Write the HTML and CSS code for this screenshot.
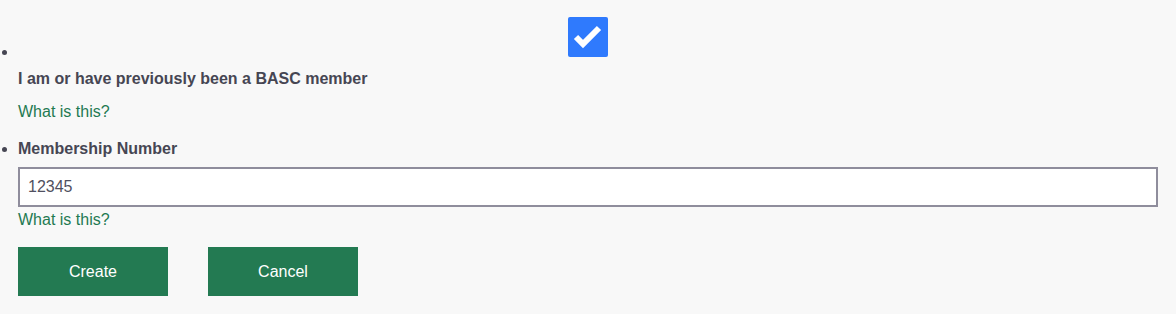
FILE: index.html
```html
<!DOCTYPE html>
<html lang="en">
    <head>
        <meta charset="UTF-8" />
        <meta name="viewport" content="width=device-width, initial-scale=1.0" />
        <link rel="stylesheet" href="styles.css">
        <title>Membership</title>
    </head>

    <body>
        <form class="member-form">
            <ul class="fields">
                <li>
                    <div class="check-row">
                        <span class="checkbox">
                            <svg width="40" height="40" viewBox="0 0 40 40">
                                <polyline points="8,20 15,27 31,11" fill="none" stroke="#fff" stroke-width="6" stroke-linejoin="miter" />
                            </svg>
                        </span>
                    </div>
                    <div class="label">I am or have previously been a BASC member</div>
                    <a class="help first" href="#">What is this?</a>
                </li>
                <li class="second">
                    <div class="label">Membership Number</div>
                    <input class="text-input" type="text" value="12345">
                    <a class="help near" href="#">What is this?</a>
                </li>
            </ul>

            <div class="actions">
                <button type="button" class="btn">Create</button>
                <button type="button" class="btn">Cancel</button>
            </div>
        </form>
    </body>
</html>
```

FILE: styles.css
```css
* {
    box-sizing: border-box;
}

body {
    margin: 0;
    background: #f8f8f8;
    font-family: "Liberation Sans", Arial, sans-serif;
    font-size: 16px;
    line-height: 18px;
    color: #464653;
}

.member-form {
    padding: 17px 18px 0;
}

.fields {
    margin: 0;
    padding: 0;
}

.check-row {
    text-align: center;
}

.checkbox {
    display: inline-block;
    width: 40px;
    height: 40px;
    background: #2f7afd;
    border-radius: 2px;
}

.checkbox svg {
    display: block;
}

.label {
    font-weight: bold;
    margin-top: 9px;
}

.second .label {
    margin-top: 0;
}

.second {
    margin-top: 19px;
}

.help {
    display: block;
    color: #1f7a52;
    text-decoration: none;
}

.help.first {
    margin-top: 15px;
}

.help.near {
    margin-top: 4px;
}

.text-input {
    display: block;
    width: 100%;
    height: 40px;
    margin-top: 9px;
    padding: 0 8px;
    border: 2px solid #8f8d9c;
    background: #fff;
    font-family: inherit;
    font-size: 16px;
    color: #505060;
    outline: none;
}

.actions {
    display: flex;
    gap: 40px;
    margin-top: 18px;
}

.btn {
    width: 150px;
    height: 49px;
    border: none;
    background: #237a52;
    color: #fff;
    font-family: inherit;
    font-size: 16px;
}
```
